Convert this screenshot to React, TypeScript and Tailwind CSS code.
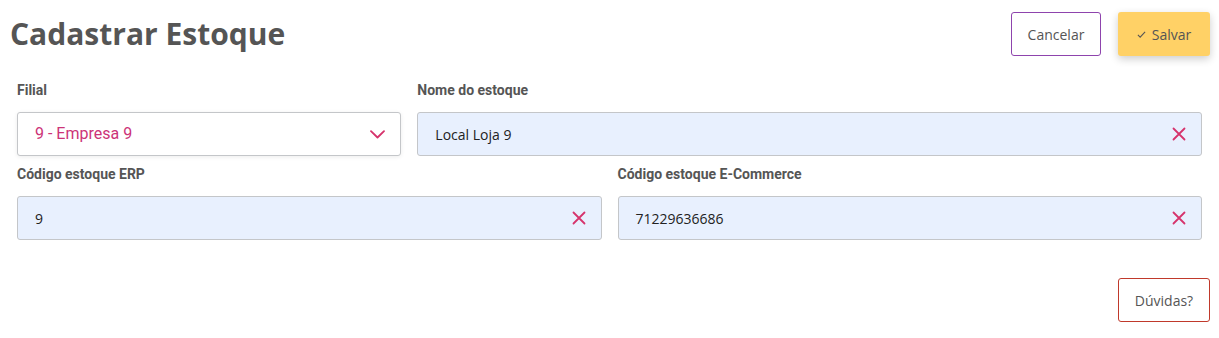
import React from "react";

const pink = "#d6336c";

const ClearIcon = () => (
  <svg className="w-[14px] h-[14px]" viewBox="0 0 14 14" fill="none" stroke={pink} strokeWidth={1.8} strokeLinecap="round">
    <path d="M1.5 1.5l11 11M12.5 1.5l-11 11" />
  </svg>
);

const TextField: React.FC<{ label: string; value: string; className?: string }> = ({ label, value, className }) => (
  <div className={className}>
    <label className="block text-[14px] font-bold text-[#555] mb-[12px] leading-[20px] font-['Roboto',sans-serif]">{label}</label>
    <div className="h-[44px] flex items-center justify-between rounded-[3px] border border-[#c4c6c9] bg-[#e8f0fe] pl-[17px] pr-[15px]">
      <span className="text-[14px] text-[#222] font-['Open_Sans',sans-serif]">{value}</span>
      <ClearIcon />
    </div>
  </div>
);

export default function App() {
  return (
    <div className="w-[1219px] h-[338px] bg-white font-['Open_Sans',sans-serif]">
      {/* Header */}
      <div className="flex items-start justify-between pl-[10px] pr-[9px] pt-[12px]">
        <h1 className="text-[30px] font-bold text-[#555] leading-[43px]">Cadastrar Estoque</h1>
        <div className="flex gap-[17px]">
          <button className="h-[44px] w-[90px] rounded-[3px] border border-[#8e44ad] bg-white text-[14px] text-[#555]">
            Cancelar
          </button>
          <button className="h-[44px] w-[92px] rounded-[3px] bg-[#ffd166] text-[14px] text-[#555] shadow-[0_3px_8px_rgba(0,0,0,0.2)] flex items-center justify-center gap-[6px]">
            <svg className="w-[9px] h-[9px]" viewBox="0 0 10 10" fill="none" stroke="#555" strokeWidth={1.2}>
              <path d="M1 5.5l2.5 2.5L9 2" />
            </svg>
            Salvar
          </button>
        </div>
      </div>

      {/* Form */}
      <div className="grid grid-cols-12 gap-x-[16px] gap-y-[8px] px-[17px] mt-[24px]">
        <div className="col-span-4">
          <label className="block text-[14px] font-bold text-[#555] mb-[12px] leading-[20px] font-['Roboto',sans-serif]">Filial</label>
          <div className="h-[44px] flex items-center justify-between rounded-[3px] border border-[#c4c6c9] bg-white shadow-[0_1px_4px_rgba(0,0,0,0.08)] pl-[17px] pr-[15px]">
            <span className="text-[16px] text-[#cc3378] font-['Roboto',sans-serif]">9 - Empresa 9</span>
            <svg className="w-[15px] h-[9px]" viewBox="0 0 15 9" fill="none" stroke={pink} strokeWidth={1.8} strokeLinecap="round" strokeLinejoin="round">
              <path d="M1 1.2l6.5 6.3 6.5-6.3" />
            </svg>
          </div>
        </div>
        <TextField className="col-span-8" label="Nome do estoque" value="Local Loja 9" />
        <TextField className="col-span-6" label="Código estoque ERP" value="9" />
        <TextField className="col-span-6" label="Código estoque E-Commerce" value="71229636686" />
      </div>

      {/* Footer */}
      <div className="flex justify-end pr-[9px] mt-[38px]">
        <button className="h-[44px] w-[92px] rounded-[3px] border border-[#c0392b] bg-white text-[14px] text-[#555]">
          Dúvidas?
        </button>
      </div>
    </div>
  );
}
